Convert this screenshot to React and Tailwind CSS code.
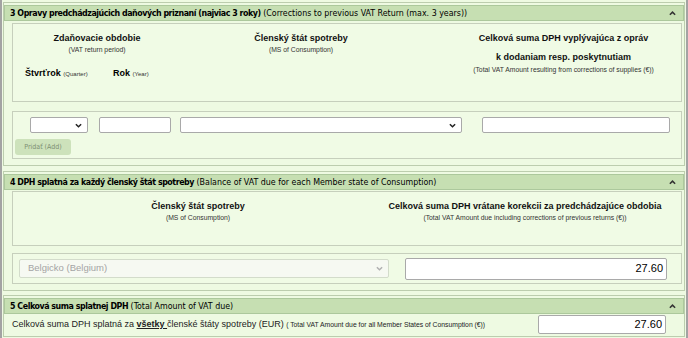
import React from "react";

const Chevron = ({ className }) => (
  <svg viewBox="0 0 8 5" className={className} fill="none" stroke="currentColor" strokeWidth="1.7">
    <path d="M1 1l3 3 3-3" />
  </svg>
);

const Caret = () => (
  <svg viewBox="0 0 8 5" className="w-[7px] h-[5px] text-[#333]" fill="none" stroke="currentColor" strokeWidth="1.8">
    <path d="M1 4l3-3 3 3" />
  </svg>
);

function Header({ bold, normal }) {
  return (
    <div className="h-[16px] flex items-center justify-between bg-[#c6dfb2] border border-[#acc89c] pl-[5px] pr-[7px] font-['DejaVu_Sans_Condensed','DejaVu_Sans',sans-serif] text-[8.8px] text-black leading-none">
      <div className="whitespace-nowrap">
        <span className="font-bold tracking-[-0.45px]">{bold}</span> {normal}
      </div>
      <Caret />
    </div>
  );
}

const Box = ({ className = "", children }) => (
  <div className={"ml-[8px] mr-[2px] border border-[#c6cfbc] bg-[#f0fbe5] " + className}>{children}</div>
);

const Lbl = ({ children, className = "" }) => (
  <div className={"text-[9px] leading-[11px] font-bold text-[#111] whitespace-nowrap " + className}>{children}</div>
);
const Small = ({ children, className = "" }) => (
  <div className={"text-[6.8px] leading-[8px] text-[#333] whitespace-nowrap " + className}>{children}</div>
);

export default function App() {
  return (
    <div className="w-[688px] h-[338px] overflow-hidden bg-[#eefae2] border-l-2 border-r-2 border-[#a3a3a3] pt-[2px] px-[1px] font-['Liberation_Sans',Arial,sans-serif] text-black">
      {/* Section 3 */}
      <section className="border border-[#bccdae] pt-[2px] pb-[6px]">
        <Header
          bold="3 Opravy predchádzajúcich daňových priznaní (najviac 3 roky)"
          normal="(Corrections to previous VAT Return (max. 3 years))"
        />
        <Box className="mt-[2px] h-[79px] pt-[9px] flex">
          <div className="w-[168px] flex flex-col items-center">
            <Lbl>Zdaňovacie obdobie</Lbl>
            <Small className="mt-[2px]">(VAT return period)</Small>
            <div className="self-stretch flex mt-[14px] pl-[12px] text-[9px] leading-[11px]">
              <div className="w-[88px] whitespace-nowrap">
                <span className="font-bold">Štvrťrok</span>{" "}
                <span className="text-[6px] text-[#333]">(Quarter)</span>
              </div>
              <div className="whitespace-nowrap">
                <span className="font-bold">Rok</span>{" "}
                <span className="text-[6px] text-[#333]">(Year)</span>
              </div>
            </div>
          </div>
          <div className="w-[240px] flex flex-col items-center">
            <Lbl>Členský štát spotreby</Lbl>
            <Small className="mt-[2px]">(MS of Consumption)</Small>
          </div>
          <div className="ml-[25px] flex-1 flex flex-col items-center">
            <Lbl>Celková suma DPH vyplývajúca z opráv</Lbl>
            <Lbl className="mt-[8px]">k dodaniam resp. poskytnutiam</Lbl>
            <Small className="mt-[3px]">(Total VAT Amount resulting from corrections of supplies (€))</Small>
          </div>
        </Box>
        <Box className="mt-[9px] h-[48px] pt-[5px] pl-[2px]">
          <div className="flex items-center">
            <div className="ml-[15px] w-[58px] h-[16px] bg-white border border-[#a9a9a9] rounded-[2px] flex items-center justify-end pr-[5px]">
              <Chevron className="w-[7px] h-[5px] text-[#222]" />
            </div>
            <div className="ml-[11px] w-[72px] h-[16px] bg-white border border-[#a9a9a9] rounded-[2px]" />
            <div className="ml-[9px] w-[282px] h-[16px] bg-white border border-[#a9a9a9] rounded-[2px] flex items-center justify-end pr-[5px]">
              <Chevron className="w-[7px] h-[5px] text-[#222]" />
            </div>
            <div className="ml-[20px] w-[188px] h-[16px] bg-white border border-[#a9a9a9] rounded-[2px]" />
          </div>
          <div className="mt-[6px] w-[56px] h-[16px] rounded-[3px] bg-[#cde2bb] flex items-center justify-center font-['DejaVu_Sans_Condensed','DejaVu_Sans',sans-serif] text-[7px] text-[#7d8f72]">
            Pridať (Add)
          </div>
        </Box>
      </section>

      {/* Section 4 */}
      <section className="mt-[5px] border border-[#bccdae] pt-[2px] pb-[6px]">
        <Header
          bold="4 DPH splatná za každý členský štát spotreby"
          normal="(Balance of VAT due for each Member state of Consumption)"
        />
        <Box className="mt-[1px] h-[55px] pt-[9px] flex">
          <div className="w-[370px] flex flex-col items-center">
            <Lbl>Členský štát spotreby</Lbl>
            <Small className="mt-[2px]">(MS of Consumption)</Small>
          </div>
          <div className="w-[284px] flex flex-col items-center">
            <Lbl>Celková suma DPH vrátane korekcii za predchádzajúce obdobia</Lbl>
            <Small className="mt-[2px]">(Total VAT Amount due including corrections of previous returns (€))</Small>
          </div>
        </Box>
        <Box className="mt-[7px] h-[31px] flex items-center">
          <div className="ml-[6px] w-[370px] h-[19px] bg-[#f6f9f2] border border-[#d3dccb] rounded-[2px] flex items-center justify-between pl-[8px] pr-[5px]">
            <span className="text-[9.5px] text-[#a4a4a4]">Belgicko (Belgium)</span>
            <Chevron className="w-[7px] h-[5px] text-[#b0b0b0]" />
          </div>
          <div className="ml-[16px] w-[262px] h-[22px] bg-white border border-[#a9a9a9] rounded-[2px] flex items-center justify-end pr-[3px] text-[11px]">
            27.60
          </div>
        </Box>
      </section>

      {/* Section 5 */}
      <section className="mt-[4px] border border-[#bccdae] pt-[2px] h-[42px]">
        <Header bold="5 Celková suma splatnej DPH" normal="(Total Amount of VAT due)" />
        <div className="flex items-center h-[21px] pl-[8px]">
          <div className="whitespace-nowrap text-[9px] text-[#222]">
            Celková suma DPH splatná za <span className="font-bold underline">všetky </span>členské štáty spotreby (EUR){" "}
            <span className="text-[6.8px]">( Total VAT Amount due for all Member States of Consumption (€))</span>
          </div>
          <div className="ml-auto mr-[18px] w-[128px] h-[19px] bg-white border border-[#a9a9a9] rounded-[2px] flex items-center justify-end pr-[3px] text-[11px]">
            27.60
          </div>
        </div>
      </section>
    </div>
  );
}
